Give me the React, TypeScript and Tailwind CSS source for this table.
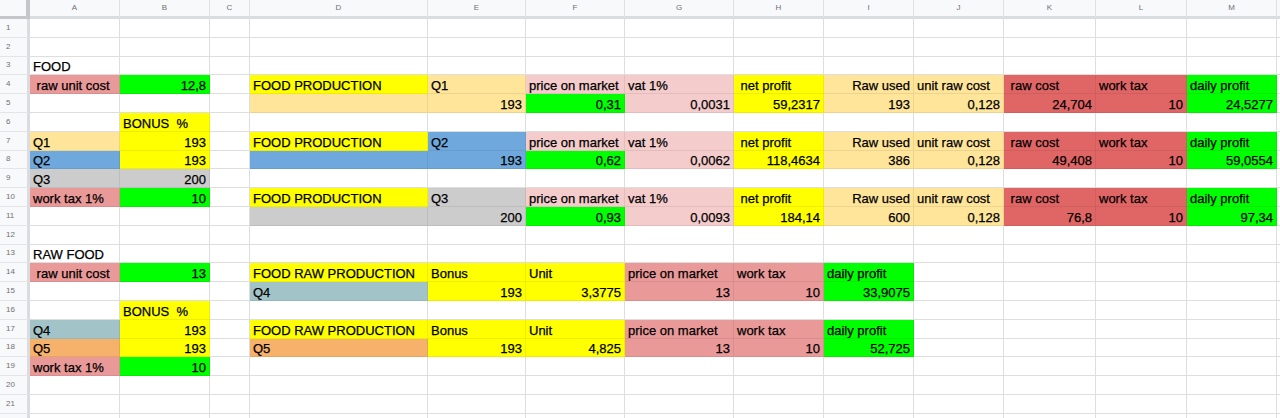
const FILL = {
  y: "bg-[#ffff00] border-black/[0.07]",
  g: "bg-[#00ff00] border-black/[0.07]",
  ly: "bg-[#ffe599] border-black/[0.07]",
  lp: "bg-[#f4cccc] border-black/[0.07]",
  p: "bg-[#ea9999] border-black/[0.07]",
  red: "bg-[#e06666] border-black/[0.07]",
  b: "bg-[#6fa8dc] border-black/[0.07]",
  gr: "bg-[#cccccc] border-black/[0.07]",
  t: "bg-[#a2c4c9] border-black/[0.07]",
  o: "bg-[#f6b26b] border-black/[0.07]",
  w: "bg-white border-[#dedede]",
};

type Fill = keyof typeof FILL;
type Spec = [string, Fill, "r"?];
type Row = Record<string, Spec>;

const COLS = ["A", "B", "C", "D", "E", "F", "G", "H", "I", "J", "K", "L", "M"];

// header row of one FOOD PRODUCTION block
const prodHead = (q: string, qf: Fill): Row => ({
  D: ["FOOD PRODUCTION", "y"],
  E: [q, qf],
  F: ["price on market", "lp"],
  G: ["vat 1%", "lp"],
  H: [" net profit", "y"],
  I: ["Raw used", "ly", "r"],
  J: ["unit raw cost", "ly"],
  K: [" raw cost", "red"],
  L: ["work tax", "red"],
  M: ["daily profit", "g"],
});

const prodVals = (qf: Fill, v: string[]): Row => ({
  D: ["", qf],
  E: [v[0], qf, "r"],
  F: [v[1], "g", "r"],
  G: [v[2], "lp", "r"],
  H: [v[3], "y", "r"],
  I: [v[4], "ly", "r"],
  J: [v[5], "ly", "r"],
  K: [v[6], "red", "r"],
  L: [v[7], "red", "r"],
  M: [v[8], "g", "r"],
});

const rawHead: Row = {
  D: ["FOOD RAW PRODUCTION", "y"],
  E: ["Bonus", "y"],
  F: ["Unit", "y"],
  G: ["price on market", "p"],
  H: ["work tax", "p"],
  I: ["daily profit", "g"],
};

const rawVals = (q: string, qf: Fill, v: string[]): Row => ({
  D: [q, qf],
  E: [v[0], "y", "r"],
  F: [v[1], "y", "r"],
  G: [v[2], "p", "r"],
  H: [v[3], "p", "r"],
  I: [v[4], "g", "r"],
});

const ROWS: Record<number, Row> = {
  3: { A: ["FOOD", "w"] },
  4: { A: [" raw unit cost", "p"], B: ["12,8", "g", "r"], ...prodHead("Q1", "ly") },
  5: prodVals("ly", ["193", "0,31", "0,0031", "59,2317", "193", "0,128", "24,704", "10", "24,5277"]),
  6: { B: ["BONUS  %", "y"] },
  7: { A: ["Q1", "ly"], B: ["193", "y", "r"], ...prodHead("Q2", "b") },
  8: {
    A: ["Q2", "b"],
    B: ["193", "y", "r"],
    ...prodVals("b", ["193", "0,62", "0,0062", "118,4634", "386", "0,128", "49,408", "10", "59,0554"]),
  },
  9: { A: ["Q3", "gr"], B: ["200", "gr", "r"] },
  10: { A: ["work tax 1%", "p"], B: ["10", "g", "r"], ...prodHead("Q3", "gr") },
  11: prodVals("gr", ["200", "0,93", "0,0093", "184,14", "600", "0,128", "76,8", "10", "97,34"]),
  13: { A: ["RAW FOOD", "w"] },
  14: { A: [" raw unit cost", "p"], B: ["13", "g", "r"], ...rawHead },
  15: rawVals("Q4", "t", ["193", "3,3775", "13", "10", "33,9075"]),
  16: { B: ["BONUS  %", "y"] },
  17: { A: ["Q4", "t"], B: ["193", "y", "r"], ...rawHead },
  18: { A: ["Q5", "o"], B: ["193", "y", "r"], ...rawVals("Q5", "o", ["193", "4,825", "13", "10", "52,725"]) },
  19: { A: ["work tax 1%", "p"], B: ["10", "g", "r"] },
};

function Cell({ spec }: { spec?: Spec }) {
  const [text, fill, align] = spec ?? ["", "w" as Fill];
  return (
    <div
      className={`flex items-end overflow-hidden whitespace-pre border-r border-b px-[3px] text-[13px] leading-[15px] text-black [-webkit-text-stroke:0.25px_black] ${FILL[fill]} ${
        align === "r" ? "justify-end" : "justify-start"
      }`}
    >
      {text}
    </div>
  );
}

export default function App() {
  const rows = Array.from({ length: 22 }, (_, i) => i + 1);
  return (
    <div className="h-[418px] w-[1280px] overflow-hidden bg-white font-['Liberation_Sans',Arial,sans-serif]">
      <div className="grid grid-cols-[30px_90px_90px_40px_178px_98px_99px_109px_90px_90px_90px_92px_91px_90px_3px] grid-rows-[19px_repeat(22,18.8px)]">
        <div className="border-r-[4px] border-b-[3px] border-r-[#c4c7c9] border-b-[#c4c7c9] bg-[#f8f9fa]" />
        {COLS.map((c) => (
          <div
            key={c}
            className="flex items-center justify-center border-r border-b-[3px] border-r-[#dfe1e3] border-b-[#dadce0] bg-[#f8f9fa] text-[8px] text-[#707070]"
          >
            {c}
          </div>
        ))}
        <div className="border-b-[3px] border-b-[#dadce0] bg-[#f8f9fa]" />

        {rows.map((r) => (
          <div key={r} className="contents">
            <div className="flex items-center border-r-[3px] border-b border-r-[#dadce0] border-b-[#e3e5e7] bg-[#f8f9fa] pl-[6px] text-[8px] text-[#707070]">
              {r < 22 ? r : ""}
            </div>
            {COLS.map((c) => (
              <Cell key={c} spec={ROWS[r]?.[c]} />
            ))}
            <div className="border-b border-[#dedede] bg-white" />
          </div>
        ))}
      </div>
    </div>
  );
}
